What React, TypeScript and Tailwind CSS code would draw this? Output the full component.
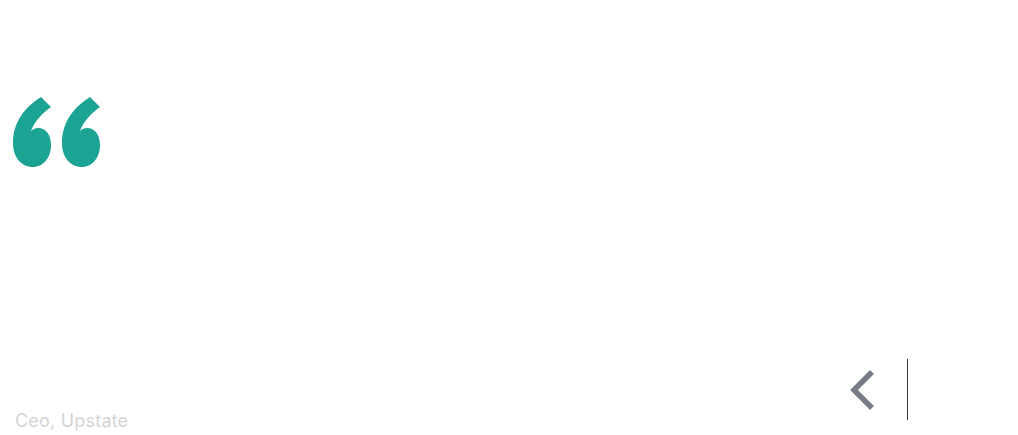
import React from "react";

const QuoteMark = () => (
  <svg width="38" height="70" viewBox="0 0 38 70" className="fill-[#1ba393]">
    <path d="M28 0 L38 10 C30 16 22 23 18 34 C20 32 23 31 25 31 C33 31 38 38 38 48 C38 61 30 70 20 70 C8 70 0 60 0 46 C0 25 12 10 28 0 Z" />
  </svg>
);

const App = () => {
  return (
    <div className="flex flex-col w-[1018px] h-[435px] bg-white font-['Inter','Open_Sans',sans-serif]">
      <div className="flex flex-row gap-[11px] pl-[13px] pt-[97px]">
        <QuoteMark />
        <QuoteMark />
      </div>
      <div className="flex flex-1 flex-row items-end justify-between">
        <div className="pl-[15px] pb-[2px] text-[18px] leading-[24px] tracking-[0.2px] text-[#d4d4d4]">
          Ceo, Upstate
        </div>
        <div className="flex flex-row items-end mr-[110px] pb-[15px]">
          <button className="flex items-center justify-center w-[30px] h-[40px] mb-[10px] mr-[30px]">
            <svg width="26" height="40" viewBox="0 0 26 40">
              <path
                d="M21 4 L5 20 L21 36"
                fill="none"
                stroke="#777c87"
                strokeWidth="5.5"
                strokeLinecap="square"
              />
            </svg>
          </button>
          <div className="w-px h-[61px] bg-[#333]" />
        </div>
      </div>
    </div>
  );
};

export default App;
